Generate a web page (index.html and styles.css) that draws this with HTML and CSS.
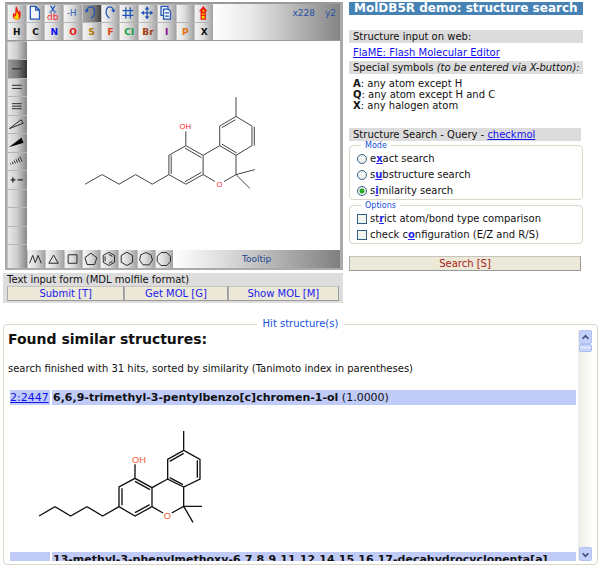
FILE: index.html
```html
<!DOCTYPE html>
<html lang="en">
<head>
<meta charset="utf-8">
<title>MolDB5R demo: structure search</title>
<link rel="stylesheet" href="styles.css">
</head>
<body>
<main class="top">
  <section class="left">
    <div class="editor">
      <div class="toolbar">
        <div class="tools">
          <button class="tool" aria-label="Clear"><svg viewBox="0 0 54 54"><path fill="#f01808" d="M24 3C30 10 27 16 33 22L36 17C41 30 40 46 27 47C13 47 12 34 16 25L20 30C24 21 20 12 24 3Z"/><path fill="#ffd800" d="M26 20C28 27 34 30 33 37C33 43 30 46 26 46C18 46 17 38 20 33L23 36C26 31 24 26 26 20Z"/></svg></button>
          <button class="tool" aria-label="New"><svg viewBox="0 0 54 54"><path class="ln page" d="M9 4H26L38 16V45H9ZM26 4V16H38"/></svg></button>
          <button class="tool" aria-label="Delete bond"><svg viewBox="0 0 54 54"><path class="ln" d="M16 2L27 20M30 2L19 20"/><circle class="ln thin" cx="16" cy="22" r="3"/><circle class="ln thin" cx="30" cy="22" r="3"/><text class="wide" x="5" y="47" font-size="28" fill="#f02030">db</text></svg></button>
          <button class="tool" aria-label="Hydrogen"><svg viewBox="0 0 54 54"><text class="wide" x="8" y="35" font-size="27" fill="#2a5cb0">-H</text></svg></button>
          <button class="tool active" aria-label="Undo"><svg viewBox="0 0 54 54"><path class="ln" d="M10 18C14 2 32 2 35 17C37 28 31 37 24 42"/><path fill="#1f55b5" d="M4 14L18 17L9 25Z"/></svg></button>
          <button class="tool" aria-label="Redo"><svg viewBox="0 0 54 54"><path class="ln" d="M35 18C31 2 15 2 12 17C10 28 16 37 22 42"/><path fill="#1f55b5" d="M41 14L27 17L36 25Z"/></svg></button>
          <button class="tool" aria-label="Grid"><svg viewBox="0 0 54 54"><path class="ln" d="M17 7V43M31 7V43M6 18H41M6 33H41"/></svg></button>
          <button class="tool" aria-label="Move"><svg viewBox="0 0 54 54"><path class="ln" d="M24 9V41M8 25H40"/><path fill="#1f55b5" d="M24 4L31 14H17ZM24 46L31 36H17ZM4 25L14 18V32ZM44 25L34 18V32Z"/></svg></button>
          <button class="tool" aria-label="Copy"><svg viewBox="0 0 54 54"><path class="ln page" d="M8 4H30V33H8Z"/><path class="ln page" d="M16 13H31L38 20V45H16ZM21 25H33M21 35H33"/></svg></button>
          <button class="tool" aria-label="Blank"></button>
          <button class="tool" aria-label="Template"><svg viewBox="0 0 54 54"><path fill="#f01808" d="M25 3L38 20H33V47H16V20H11Z"/><path fill="#ffe000" d="M25 14L30 21H20ZM20 27H29V31H20ZM20 35H29V43H20Z"/></svg></button>
          <button class="tool atom">H</button>
          <button class="tool atom">C</button>
          <button class="tool atom n">N</button>
          <button class="tool atom o">O</button>
          <button class="tool atom s">S</button>
          <button class="tool atom f">F</button>
          <button class="tool atom cl">Cl</button>
          <button class="tool atom br">Br</button>
          <button class="tool atom i">I</button>
          <button class="tool atom p">P</button>
          <button class="tool atom">X</button>
        </div>
        <div class="coords"><span>x228</span><span>y2</span></div>
      </div>
      <div class="work">
        <div class="bonds">
          <button class="tool" aria-label="Select"></button>
          <button class="tool active" aria-label="Single bond"><svg viewBox="0 0 54 54"><path class="bk" d="M11 25H42"/></svg></button>
          <button class="tool" aria-label="Double bond"><svg viewBox="0 0 54 54"><path class="bk" d="M11 20H42M11 30H42"/></svg></button>
          <button class="tool" aria-label="Triple bond"><svg viewBox="0 0 54 54"><path class="bk" d="M11 18H42M11 26H42M11 34H42"/></svg></button>
          <button class="tool" aria-label="Wedge outline"><svg viewBox="0 0 54 54"><path class="bk" d="M3 40L40 12L47 23Z"/></svg></button>
          <button class="tool" aria-label="Wedge"><svg viewBox="0 0 54 54"><path d="M1 39L41 9L48 25Z"/></svg></button>
          <button class="tool" aria-label="Hash bond"><svg viewBox="0 0 54 54"><path class="bk" d="M6 33L8 37M12 28L15 35M18 24L22 33M24 20L29 31M30 15L36 29M36 11L43 27"/></svg></button>
          <button class="tool" aria-label="Charge"><svg viewBox="0 0 54 54"><path class="bk plus" d="M7 25H22M14 17V33M29 25H46"/></svg></button>
          <button class="tool" aria-label="Blank"></button>
          <button class="tool" aria-label="Blank"></button>
          <button class="tool" aria-label="Blank"></button>
          <button class="tool" aria-label="Blank"></button>
        </div>
        <div class="stage">
          <svg class="canvas" viewBox="-99 -132 942 630">
            <g class="mol">
              <path d="M530 37V95L578 124V183L530 212L481 183V124L530 95M487 129L528 105M585 126V183M487 178L532 205M481 183L431 212L379 183L328 212V270L379 299L431 270V212M376 190L426 219M335 212V268M376 292L426 263M379 183V140M431 270L467 291M494 291L530 270V212M530 270L587 255M530 270L572 312M328 270L278 299L228 270L178 299L127 270L76 299"/>
            </g>
            <g fill="#f22"><text x="360" y="133" font-size="23">OH</text><text x="471" y="308" font-size="23">O</text></g>
          </svg>
          <div class="rings">
            <button class="tool" aria-label="Chain"><svg viewBox="0 0 54 54"><path class="bk" d="M5 39L15 14L23 37L32 14L42 39"/></svg></button>
            <button class="tool" aria-label="Triangle"><svg viewBox="0 0 54 54"><path class="bk" d="M24 13L39 39H9Z"/></svg></button>
            <button class="tool" aria-label="Square"><svg viewBox="0 0 54 54"><path class="bk" d="M10 12H38V39H10Z"/></svg></button>
            <button class="tool" aria-label="Pentagon"><svg viewBox="0 0 54 54"><path class="bk" d="M25 7L44 21L37 43H13L6 21Z"/></svg></button>
            <button class="tool" aria-label="Benzene"><svg viewBox="0 0 54 54"><path class="bk" d="M25 4L43 14V36L25 46L7 36V14ZM13 17V33M25 11L36 17M25 39L36 33"/></svg></button>
            <button class="tool" aria-label="Hexagon"><svg viewBox="0 0 54 54"><path class="bk" d="M25 4L43 14V36L25 46L7 36V14Z"/></svg></button>
            <button class="tool" aria-label="Heptagon"><svg viewBox="0 0 54 54"><path class="bk" d="M25 5L41 12L46 29L35 44H16L5 29L9 12Z"/></svg></button>
            <button class="tool" aria-label="Octagon"><svg viewBox="0 0 54 54"><path class="bk" d="M16 5H34L46 17V34L34 46H16L4 34V17Z"/></svg></button>
            <div class="tooltip-bar">Tooltip</div>
          </div>
        </div>
      </div>
    </div>
    <form class="molform">
      <div class="caption">Text input form (MDL molfile format)</div>
      <div class="actions">
        <button type="button">Submit [T]</button>
        <button type="button">Get MOL [G]</button>
        <button type="button">Show MOL [M]</button>
      </div>
    </form>
  </section>
  <section class="side">
    <h1>MolDB5R demo: structure search</h1>
    <div class="bar">Structure input on web:</div>
    <p class="linkline"><a href="#">FlaME: Flash Molecular Editor</a></p>
    <div class="bar">Special symbols <i>(to be entered via X-button):</i></div>
    <p class="symbols"><b>A</b>: any atom except H<br><b>Q</b>: any atom except H and C<br><b>X</b>: any halogen atom</p>
    <div class="bar query">Structure Search - Query - <a href="#">checkmol</a></div>
    <form>
      <fieldset class="group">
        <legend>Mode</legend>
        <label><input type="radio" name="mode"><span>e<u>x</u>act search</span></label>
        <label><input type="radio" name="mode"><span>s<u>u</u>bstructure search</span></label>
        <label><input type="radio" name="mode" checked><span>s<u>i</u>milarity search</span></label>
      </fieldset>
      <fieldset class="group">
        <legend>Options</legend>
        <label><input type="checkbox"><span>st<u>r</u>ict atom/bond type comparison</span></label>
        <label><input type="checkbox"><span>check c<u>o</u>nfiguration (E/Z and R/S)</span></label>
      </fieldset>
      <button type="button" class="search">Search [S]</button>
    </form>
  </section>
</main>
<fieldset class="hits">
  <legend>Hit structure(s)</legend>
  <div class="pane">
    <div class="results">
      <h2>Found similar structures:</h2>
      <p>search finished with 31 hits, sorted by similarity (Tanimoto index in parentheses)</p>
      <table>
        <tr class="hit"><td class="id"><a href="#">2:2447</a></td><td><b>6,6,9-trimethyl-3-pentylbenzo[c]chromen-1-ol</b> (1.0000)</td></tr>
        <tr><td colspan="2" class="drawing">
          <svg viewBox="30 -45 630 441">
            <path class="struct" d="M551 33V91L600 118V177L551 201L503 177V118L551 91M509 124L551 100M592 121V173M509 173L549 194M503 177L456 203L405 175L357 201V260L405 288L456 260V203M405 184L450 209M366 205V256M405 278L449 254M405 175V133M456 260L489 279M515 279L551 259V201M551 259H606M551 259L579 307M357 260L308 288L261 260L212 288L165 260L117 288"/>
            <g fill="#f06030"><text x="396" y="129" font-size="28">OH</text><text x="491" y="297" font-size="28">O</text></g>
          </svg>
        </td></tr>
        <tr class="hit"><td class="id"></td><td><b>13-methyl-3-phenylmethoxy-6,7,8,9,11,12,14,15,16,17-decahydrocyclopenta[a]</b></td></tr>
      </table>
    </div>
    <div class="scroll">
      <button aria-label="Scroll up"><svg viewBox="0 0 13 13"><path d="M3 8L6.500 4.500L10 8"/></svg></button>
      <div class="thumb"></div>
      <div class="track"></div>
      <button aria-label="Scroll down"><svg viewBox="0 0 13 13"><path d="M3 5L6.500 8.500L10 5"/></svg></button>
    </div>
  </div>
</fieldset>
</body>
</html>
```
FILE: styles.css
```css
* { box-sizing: border-box; }
body { margin: 0; padding: 2px 2px 0 3px; background: #fff; color: #111; font: 10px/12px "DejaVu Sans", sans-serif; }
button, input { font: inherit; margin: 0; padding: 0; }
h1, h2, p { margin: 0; }
a { color: #11e; }
svg { display: block; }
svg text { font-family: "Liberation Sans", sans-serif; }
svg .wide { font-family: "DejaVu Sans", sans-serif; }

.top { display: grid; grid-template-columns: 340fr 234fr; gap: 6px; padding-right: 15px; }

.editor { margin-left: 2px; border: 2px solid #aaa; border-top-color: #999; border-right-width: 3px; }
.toolbar { display: flex; height: 37px; }
.tools { display: grid; grid-template-columns: repeat(11, 1fr); grid-auto-rows: 1fr; width: 206px; border-bottom: 1px solid #999; }
.tool { display: block; width: 100%; height: 100%; min-width: 0; border: 0; border-top: 1px solid #b5b5b5; border-left: 1px solid #c4c4c4; background: linear-gradient(90deg, #f4f4f4, #dcdcdc 45%, #a2a2a2); overflow: hidden; }
.tool svg { width: 18px; height: 17px; }
.tool.active { background: linear-gradient(90deg, #a5a5a5, #888 50%, #444); }
.ln { fill: none; stroke: #1f55b5; stroke-width: 4; }
.thin { stroke-width: 2; }
.page { fill: #f4f6fa; }
.bk { fill: none; stroke: #222; stroke-width: 3; }
.plus { stroke-width: 4; }
.atom { font: bold 9px/16px "DejaVu Sans", sans-serif; color: #111; }
.n { color: #11e; }
.o { color: #f01010; }
.s { color: #b07800; }
.f { color: #e03c10; }
.cl { color: #10a040; }
.br { color: #a04010; }
.i { color: #901090; }
.p { color: #e07010; }
.coords { flex: 1; display: flex; justify-content: flex-end; gap: 10px; padding: 3px 4px 0 0; background: linear-gradient(90deg, #fff, #e8e8e8 30%, #858585); border-bottom: 1px solid #999; color: #2450a8; font-size: 9px; }

.work { display: flex; }
.bonds { display: grid; grid-template-rows: repeat(11, minmax(0, 1fr)) 24px; width: 20px; }
.bonds .tool { background-image: linear-gradient(90deg, #e8e8e8, #d0d0d0 45%, #888); }
.bonds .tool.active { background-image: linear-gradient(90deg, #999, #777 50%, #333); }
.stage { flex: 1; min-width: 0; display: flex; flex-direction: column; }
.canvas { width: 100%; }
.mol { fill: none; stroke: #444; stroke-width: 3; }
.rings { display: grid; grid-template-columns: repeat(8, 1fr) 167px; height: 18px; }
.rings .tool { border-top: 0; }
.rings svg { width: 17px; }
.tooltip-bar { padding: 3px 0 0 69px; background: linear-gradient(90deg, #fff, #ddd 30%, #808080); color: #1c4590; font-size: 9px; }

.molform { margin-top: 3px; padding: 1px 4px 2px; background: #ddd; }
.actions { display: grid; grid-template-columns: 117fr 103fr 111fr; }
.actions button, .search { height: 15px; border: 1px solid #aaa; border-color: #c4c4bc #999 #999 #aaa; background: #ece9d8; color: #22e; line-height: 12px; }

h1 { padding-left: 5px; background: #4682b4; color: #fff; font-size: 12px; line-height: 13px; }
.bar { background: #dcdcdc; padding-left: 4px; line-height: 13px; }
h1 + .bar { margin-top: 15px; }
.linkline { padding: 4px 4px 2px; }
.symbols { padding: 4px 4px 0; line-height: 11px; }
.query { margin: 17px 2px 0 0; }
.group { margin: 0 0 1px; padding: 1px 7px 0; border: 1px solid #d8d8c8; border-radius: 4px; min-width: 0; }
.group legend { margin-left: 4px; padding: 0 4px; font-size: 8px; line-height: 9px; color: #1450dc; }
.group label { display: flex; align-items: center; gap: 3px; height: 16px; }
.group u { color: #22e; font-weight: bold; }
.group input { appearance: none; width: 10px; height: 10px; flex: none; border: 1px solid #345f86; background: #f4f4f0; }
.group input[type=radio] { border-radius: 50%; }
.group input:checked { background: radial-gradient(circle, #2a2 0 2px, #f4f4f0 3px); }
.search { display: block; width: calc(100% - 2px); margin-top: 12px; color: #a81818; }

.hits { margin: 15px 0 0; padding: 0 4px 3px; border: 1px solid #d8d8c8; border-radius: 4px; min-width: 0; }
.hits legend { margin: 0 auto; padding: 0 6px; color: #1450dc; line-height: 12px; }
.pane { display: flex; height: 231px; }
.results { flex: 1; min-width: 0; overflow: hidden; }
h2 { font-size: 14px; line-height: 18px; }
.results p { margin: 15px 0; }
table { width: 100%; border-collapse: separate; border-spacing: 2px 0; white-space: nowrap; }
td { padding: 0; }
.hit { font-size: 11px; line-height: 15px; }
.hit td { height: 15px; background: #c0cbf8; padding-left: 1px; }
.hit .id { width: 40px; padding: 0; }
.drawing svg { width: 210px; height: 147px; }
.struct { fill: none; stroke: #111; stroke-width: 4; }
.scroll { display: flex; flex-direction: column; width: 15px; padding: 0 1px; background: linear-gradient(90deg, #eeede5, #fefefb); }
.scroll button { width: 13px; height: 14px; border: 1px solid #b4c4f0; border-radius: 2px; background: #c2d0fa; }
.scroll svg { width: 11px; fill: none; stroke: #405080; stroke-width: 2; }
.thumb { height: 8px; border: 1px solid #a8bcf0; border-radius: 2px; background: linear-gradient(#c8d6fc 30%, #eef 30% 45%, #c8d6fc 45% 60%, #eef 60% 75%, #c8d6fc 75%); }
.track { flex: 1; }
```
